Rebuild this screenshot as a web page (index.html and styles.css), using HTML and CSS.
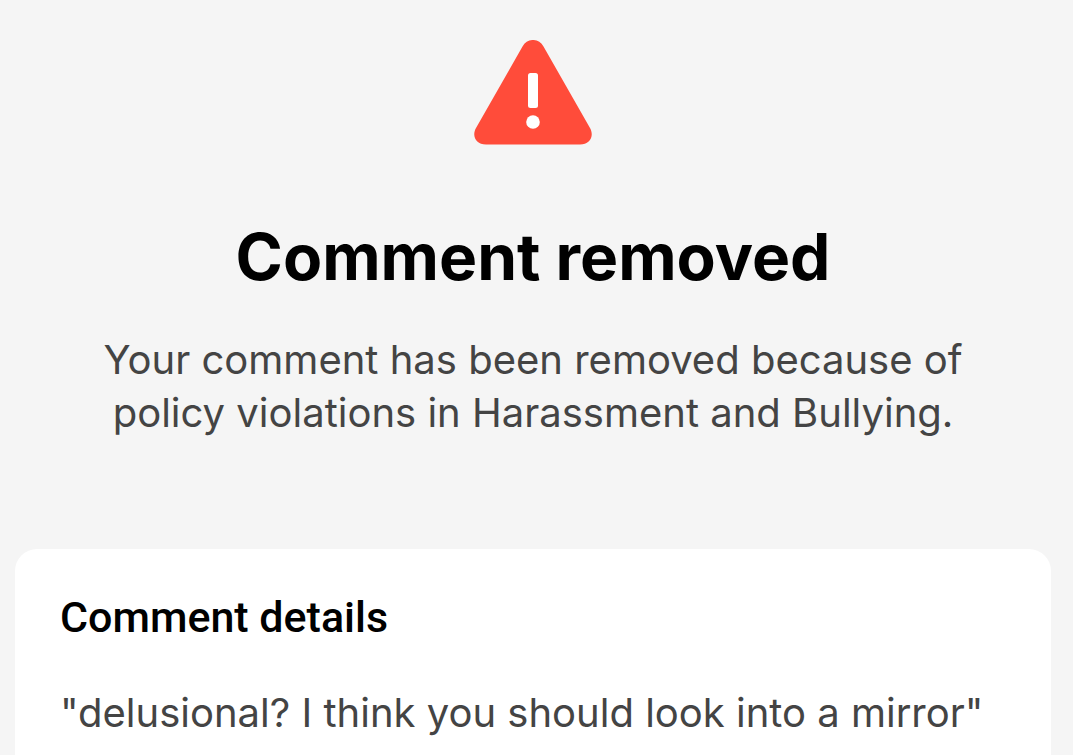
FILE: index.html
```html
<!DOCTYPE html>
<html lang="en">
<head>
<meta charset="utf-8">
<meta name="viewport" content="width=device-width, initial-scale=1">
<title>Comment removed</title>
<link rel="stylesheet" href="styles.css">
</head>
<body>
<main class="page">
  <header class="notice">
    <svg class="notice-icon" viewBox="0 0 118 105" role="img" aria-label="Warning">
      <path fill="#ff4c3a" d="M48.500 6.500C53-2.200 65-2.200 69.500 6.500L116 88C120.500 96 116 104.500 106 104.500H12C2 104.500-2.500 96 2 88Z"/>
      <rect x="54" y="33" width="10" height="35" rx="2.500" fill="#fff"/>
      <circle cx="59" cy="82" r="6.800" fill="#fff"/>
    </svg>
    <h1 class="notice-title">Comment removed</h1>
    <p class="notice-text">Your comment has been removed because of policy violations in Harassment and Bullying.</p>
  </header>
  <section class="card">
    <h2 class="card-title">Comment details</h2>
    <p class="card-text">"delusional? I think you should look into a mirror"</p>
  </section>
</main>
</body>
</html>
```
FILE: styles.css
```css
* { box-sizing: border-box; }
body {
  margin: 0;
  background: #f5f5f5;
  color: #000;
  font-family: Inter, "Liberation Sans", sans-serif;
}
.page {
  display: flex;
  flex-direction: column;
  min-height: 100vh;
  padding: 40px 22px 0 15px;
}
.notice {
  display: flex;
  flex-direction: column;
  align-items: center;
  padding: 0 80px 110px;
  text-align: center;
}
.notice-icon { width: 118px; height: 105px; }
.notice-title {
  margin: 72px 0 0;
  font-size: 64px;
  font-weight: 700;
  line-height: 80px;
}
.notice-text {
  margin: 36px 0 0;
  color: #444;
  font-size: 40px;
  line-height: 53px;
}
.card {
  flex: 1;
  padding: 40px 45px 12px;
  border-radius: 22px 22px 0 0;
  background: #fff;
}
.card-title {
  margin: 0;
  font-family: Roboto, sans-serif;
  font-size: 43px;
  font-weight: 500;
  line-height: 56px;
}
.card-text {
  margin: 40px 0 0;
  color: #444;
  font-size: 40px;
  line-height: 56px;
}
```
